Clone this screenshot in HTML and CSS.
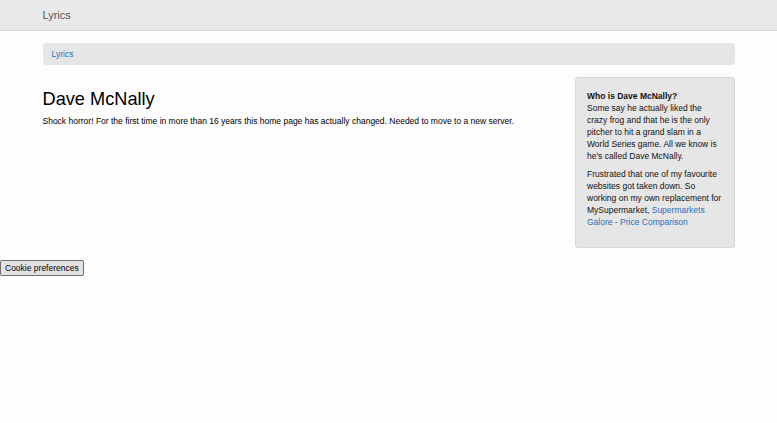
FILE: index.html
```html
<!DOCTYPE html>
<html lang="en">
<head>
  <meta charset="UTF-8" />
  <title>Dave McNally</title>
  <link rel="stylesheet" href="styles.css">
</head>
<body>
  <!-- Top navbar -->
  <nav class="navbar">
    <div class="container">
      <a class="brand" href="#">Lyrics</a>
    </div>
  </nav>

  <div class="container">
    <ol class="breadcrumb">
      <li><a href="#">Lyrics</a></li>
    </ol>

    <div class="row">
      <div class="main">
        <h1>Dave McNally</h1>
        <p>Shock horror! For the first time in more than 16 years this home page has actually changed. Needed to move to a new server.</p>
      </div>
      <div class="side">
        <div class="well">
          <p><strong>Who is Dave McNally?</strong><br>Some say he actually liked the crazy frog and that he is the only pitcher to hit a grand slam in a World Series game. All we know is he's called Dave McNally.</p>
          <p>Frustrated that one of my favourite websites got taken down. So working on my own replacement for MySupermarket, <a href="#">Supermarkets Galore - Price Comparison</a></p>
        </div>
      </div>
    </div>
  </div>

  <button class="cookie-btn">Cookie preferences</button>
</body>
</html>
```

FILE: styles.css
```css
* {
  box-sizing: border-box;
}

body {
  margin: 0;
  background: #fdfdfd;
  font-family: "Liberation Sans", Arial, sans-serif;
  font-size: 8.5px;
  line-height: 12px;
  color: #111;
}

a {
  color: #2a6ebb;
  text-decoration: none;
}

.container {
  width: 710px;
  margin: 0 auto;
  padding: 0 9px;
}

.navbar {
  height: 31px;
  background: #e9e9e9;
  border-bottom: 1px solid #d8d8d8;
}

.brand {
  display: block;
  line-height: 30px;
  font-size: 11px;
  color: #555;
}

.breadcrumb {
  list-style: none;
  margin: 12px 0 12px;
  padding: 5px 9px;
  height: 22px;
  background: #e6e6e6;
  border-radius: 3px;
}

.row {
  display: flex;
  margin: 0 -9px;
}

.main {
  width: 75%;
  padding: 0 9px;
}

.side {
  width: 25%;
  padding: 0 9px;
}

h1 {
  margin: 12px 0 6px;
  font-size: 18.2px;
  font-weight: normal;
  line-height: 20px;
  color: #000;
}

p {
  margin: 0 0 6px;
}

.main p {
  color: #000;
}

.well {
  margin-bottom: 12px;
  padding: 12px 11px 13px;
  background: #e6e6e6;
  border: 1px solid #d6d6d6;
  border-radius: 3px;
  color: #111;
}

.cookie-btn {
  display: block;
  margin: 0;
  height: 16px;
  padding: 0 4px;
  font-family: "Liberation Sans", Arial, sans-serif;
  font-size: 8.5px;
  color: #000;
  background: #e2e2e2;
  border: 1px solid #6f6f6f;
  border-radius: 2px;
}
```
